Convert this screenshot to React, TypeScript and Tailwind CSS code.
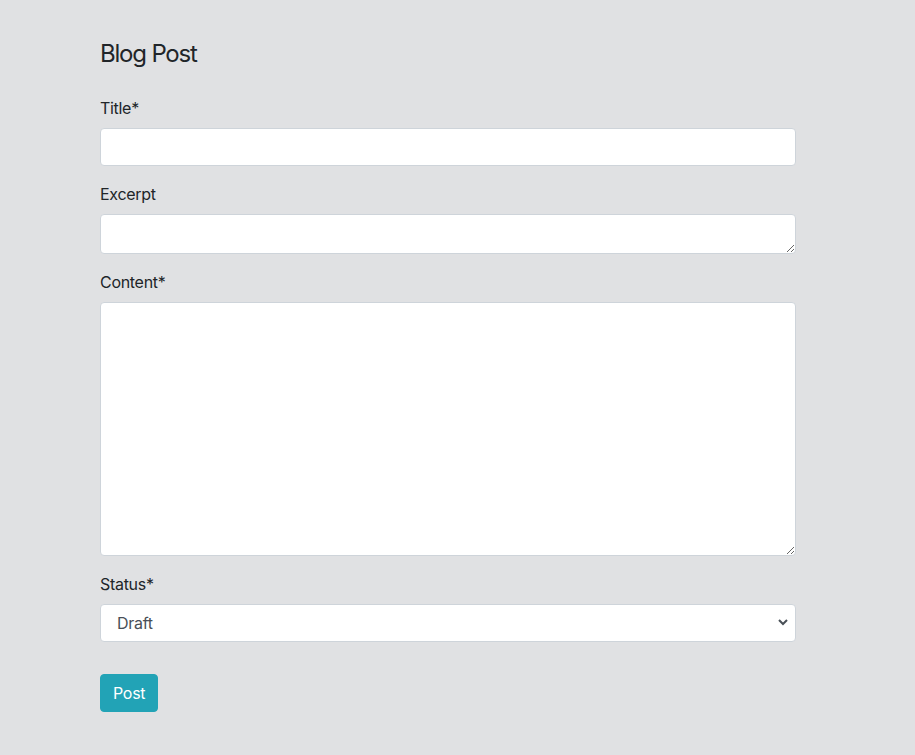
import React from "react";

export default function App() {
  return (
    <div
      className="min-h-[755px] w-full bg-[#e0e1e3] text-[#212529]"
      style={{ fontFamily: 'Inter, "Liberation Sans", Arial, sans-serif' }}
    >
      <div className="w-[696px] ml-[100px] pt-[39px] pb-[43px]">
        <h1 className="text-[24px] leading-[29px] font-normal tracking-[-1.2px] mb-[28px]">Blog Post</h1>
        <form onSubmit={(e) => e.preventDefault()}>
          <div className="mb-4">
            <label className="block text-[16px] leading-6 tracking-[-0.3px] mb-2">Title*</label>
            <input
              type="text"
              className="block w-full h-[38px] bg-white border border-[#ced4da] rounded-[4px] px-3 text-[16px] outline-none"
            />
          </div>
          <div className="mb-4">
            <label className="block text-[16px] leading-6 tracking-[-0.3px] mb-2">Excerpt</label>
            <textarea
              rows={1}
              className="block w-full h-[40px] bg-white border border-[#ced4da] rounded-[4px] px-3 py-1.5 text-[16px] outline-none"
            />
          </div>
          <div className="mb-4">
            <label className="block text-[16px] leading-6 tracking-[-0.3px] mb-2">Content*</label>
            <textarea
              className="block w-full h-[254px] bg-white border border-[#ced4da] rounded-[4px] px-3 py-1.5 text-[16px] outline-none"
            />
          </div>
          <div className="mb-8">
            <label className="block text-[16px] leading-6 tracking-[-0.3px] mb-2">Status*</label>
            <div className="relative">
              <select
                defaultValue="draft"
                className="block w-full h-[38px] appearance-none bg-white border border-[#ced4da] rounded-[4px] pl-4 pr-8 text-[16px] tracking-[-0.3px] text-[#495057] outline-none"
              >
                <option value="draft">Draft</option>
                <option value="published">Published</option>
              </select>
              <svg
                className="pointer-events-none absolute right-[8px] top-[14px]"
                width="10"
                height="8"
                viewBox="0 0 10 8"
              >
                <path d="M1 2 L5 6 L9 2" fill="none" stroke="#495057" strokeWidth="2" />
              </svg>
            </div>
          </div>
          <button
            type="submit"
            className="h-[38px] px-3 rounded-[4px] bg-[#22a3b6] border border-[#22a3b6] text-white text-[16px] tracking-[-0.3px]"
          >
            Post
          </button>
        </form>
      </div>
    </div>
  );
}
